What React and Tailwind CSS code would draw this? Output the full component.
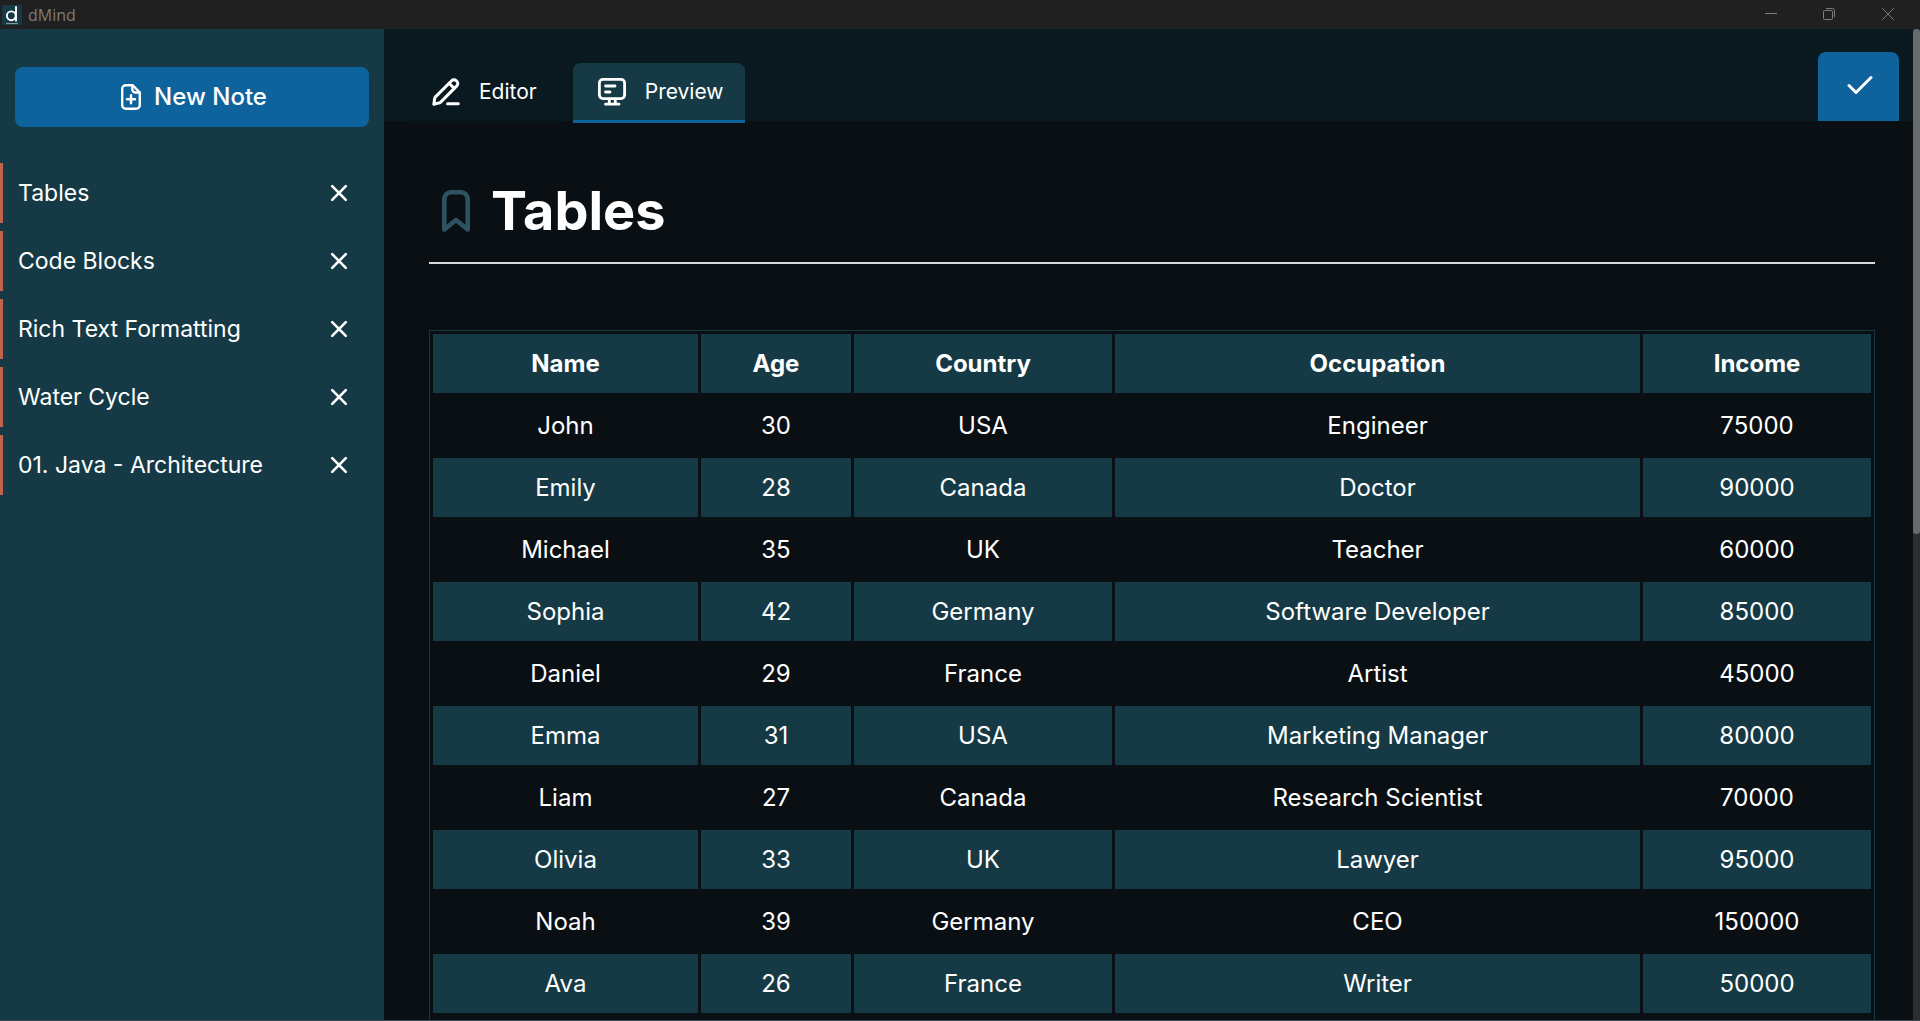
import React from "react";

const notes = ["Tables", "Code Blocks", "Rich Text Formatting", "Water Cycle", "01. Java - Architecture"];

const columns = [
  { name: "Name", width: "w-[265px]" },
  { name: "Age", width: "w-[150px]" },
  { name: "Country", width: "w-[258px]" },
  { name: "Occupation", width: "w-[525px]" },
  { name: "Income", width: "w-[228px]" },
];

const rows = [
  ["John", "30", "USA", "Engineer", "75000"],
  ["Emily", "28", "Canada", "Doctor", "90000"],
  ["Michael", "35", "UK", "Teacher", "60000"],
  ["Sophia", "42", "Germany", "Software Developer", "85000"],
  ["Daniel", "29", "France", "Artist", "45000"],
  ["Emma", "31", "USA", "Marketing Manager", "80000"],
  ["Liam", "27", "Canada", "Research Scientist", "70000"],
  ["Olivia", "33", "UK", "Lawyer", "95000"],
  ["Noah", "39", "Germany", "CEO", "150000"],
  ["Ava", "26", "France", "Writer", "50000"],
];

function Icon({ className, viewBox, strokeWidth, children }) {
  return (
    <svg
      aria-hidden="true"
      viewBox={viewBox}
      fill="none"
      stroke="currentColor"
      strokeWidth={strokeWidth}
      strokeLinecap="round"
      strokeLinejoin="round"
      className={className}
    >
      {children}
    </svg>
  );
}

function TitleBar() {
  return (
    <header className="flex h-[29px] shrink-0 items-center justify-between bg-[#202020] text-[#7c7c7c]">
      <div className="flex items-center gap-[6px] pl-[2px]">
        <svg aria-hidden="true" viewBox="0 0 20 20" className="size-5">
          <rect width="20" height="20" rx="1" fill="#163a45" />
          <circle cx="9.3" cy="10.8" r="4.4" fill="none" stroke="#fff" strokeWidth="1.9" />
          <path d="M14 1.2v15.2" stroke="#fff" strokeWidth="1.9" />
          <path d="M4 18.6h12" stroke="#9fb0b5" strokeWidth="0.9" />
        </svg>
        <span className="font-['Open_Sans',sans-serif] text-[16px] leading-5">dMind</span>
      </div>
      <div className="flex h-7 items-center self-start pr-[2px]">
        <button aria-label="Minimize" className="flex h-full w-[58px] items-center justify-center">
          <svg viewBox="0 0 12 12" className="size-3" stroke="currentColor" fill="none">
            <path d="M0 5.5h12" />
          </svg>
        </button>
        <button aria-label="Restore" className="flex h-full w-[58px] items-center justify-center">
          <svg viewBox="0 0 12 12" className="size-3" stroke="currentColor" fill="none">
            <rect x="0.5" y="2.5" width="9" height="9" rx="1" />
            <path d="M3 .5h6.5a2 2 0 0 1 2 2V9" />
          </svg>
        </button>
        <button aria-label="Close" className="flex h-full w-[60px] items-center justify-center">
          <svg viewBox="0 0 12 12" className="size-3" stroke="currentColor" fill="none">
            <path d="M.3.3l11.4 11.4M11.7.3.3 11.7" />
          </svg>
        </button>
      </div>
    </header>
  );
}

function Sidebar() {
  return (
    <aside className="w-1/5 shrink-0 bg-[#163a45] pt-[38px]">
      <div className="px-[15px]">
        <button className="flex h-[60px] w-full items-center justify-center gap-[13px] rounded-lg bg-[#0f639c] pl-1 text-[24px] font-medium">
          <Icon viewBox="0 0 20 26" strokeWidth="2.4" className="h-[26px] w-5">
            <path d="M11.5 1.2H4.8a3.600 3.600 0 0 0-3.600 3.600v16.400a3.600 3.600 0 0 0 3.600 3.600h10.400a3.600 3.600 0 0 0 3.600-3.600V8.500z" />
            <path d="M11.300 1.500v3.800a3.200 3.200 0 0 0 3.200 3.200h4" />
            <path d="M10 11.300v8M6 15.300h8" />
          </Icon>
          New Note
        </button>
      </div>
      <ul className="mt-9 flex flex-col gap-2">
        {notes.map((note) => (
          <li key={note} className="flex h-[60px] items-center justify-between border-l-3 border-[#c1624a] pr-9 pl-[15px]">
            <a href="#" className="text-[23px] leading-7">{note}</a>
            <button aria-label={`Delete ${note}`}>
              <Icon viewBox="0 0 18 18" strokeWidth="2.6" className="size-[18px]">
                <path d="M2.200 2.200l13.600 13.600M15.800 2.200L2.200 15.800" />
              </Icon>
            </button>
          </li>
        ))}
      </ul>
    </aside>
  );
}

function Toolbar() {
  return (
    <div className="flex h-[92px] shrink-0 justify-between bg-[#0a1920] pr-[14px] pl-[23px]">
      <nav className="mt-[34px] flex h-[60px] gap-[15px] text-[21px]">
        <button className="flex items-center gap-[19px] border-b-3 border-[#0a1518] bg-[#0a1920] pr-[21px] pl-[25px]">
          <Icon viewBox="0 0 28 28" strokeWidth="3" className="size-7">
            <path d="M1.800 26.200l.9-5.700a3 3 0 0 1 .8-1.600L19.600 2.700a3.300 3.300 0 0 1 4.700 0l.5.500a3.300 3.300 0 0 1 0 4.700L8.700 24.100a3 3 0 0 1-1.600.8z" />
            <path d="M17.300 5.500l4.900 4.900" />
            <path d="M15.500 25.800h10.800" />
          </Icon>
          Editor
        </button>
        <button className="flex items-center gap-[19px] rounded-t-lg border-b-3 border-[#0f639c] bg-[#163a45] pr-[22px] pl-[25px]">
          <Icon viewBox="0 0 28 28" strokeWidth="2.8" className="size-7">
            <rect x="1.400" y="1.400" width="25.200" height="19.200" rx="3.500" />
            <path d="M7.500 8h9.500M7.500 14h4.500M11.300 21v4.500M17.300 21v4.500M7.500 26.200h13.500" />
          </Icon>
          Preview
        </button>
      </nav>
      <button aria-label="Save" className="flex h-[69px] w-[81px] items-center justify-center self-end rounded-t-lg bg-[#0f639c] pb-1 pl-[2px]">
        <Icon viewBox="0 0 26 20" strokeWidth="3" className="h-5 w-[26px]">
          <path d="M2 10.500L9 17.500 24 2.500" />
        </Icon>
      </button>
    </div>
  );
}

function NoteTable() {
  return (
    <table className="w-full border-separate border-spacing-[3px] border border-[#163a45] text-center text-[24px] leading-[29px]">
      <thead>
        <tr>
          {columns.map(({ name, width }) => (
            <th key={name} className={`${width} bg-[#163a45] p-[15px] font-bold`}>{name}</th>
          ))}
        </tr>
      </thead>
      <tbody>
        {rows.map((row) => (
          <tr key={row[0]} className="group">
            {row.map((cell, i) => (
              <td key={columns[i].name} className="p-[15px] group-even:bg-[#163a45]">{cell}</td>
            ))}
          </tr>
        ))}
        <tr>
          <td colSpan={columns.length} className="h-[59px]" />
        </tr>
      </tbody>
    </table>
  );
}

export default function App() {
  return (
    <div className="flex h-screen flex-col overflow-hidden border-b border-[#3a4650] bg-[#0a0f13] font-['Inter',sans-serif] text-white">
      <TitleBar />
      <div className="flex min-h-0 flex-1">
        <Sidebar />
        <main className="flex min-w-0 flex-1 flex-col">
          <Toolbar />
          <article className="min-h-0 flex-1 overflow-hidden pt-[55px] pr-[38px] pl-[45px]">
            <div className="flex items-center border-b-2 border-[#d8d8d8] pb-4">
              <Icon viewBox="0 0 28 42" strokeWidth="4.6" className="ml-[13px] h-[42px] w-7 text-[#2d5260]">
                <path d="M25.700 39.500L14 30 2.300 39.500V9a6.700 6.700 0 0 1 6.700-6.700h10A6.700 6.700 0 0 1 25.700 9z" />
              </Icon>
              <h1 className="ml-[21px] text-[54px] leading-[70px] font-bold">Tables</h1>
            </div>
            <div className="mt-[66px]">
              <NoteTable />
            </div>
          </article>
        </main>
        <div className="w-[7px] shrink-0 bg-[#2b2e30]">
          <div className="h-[51%] rounded-full bg-[#686b6e]" />
        </div>
      </div>
    </div>
  );
}
